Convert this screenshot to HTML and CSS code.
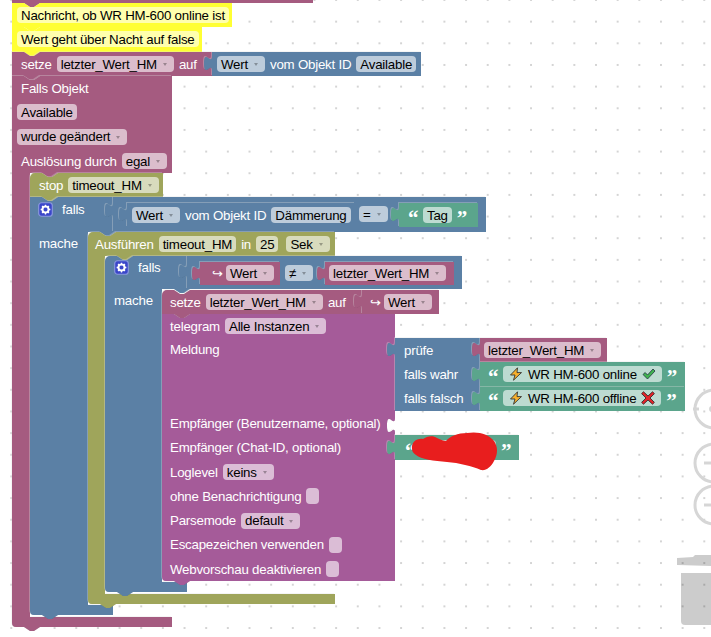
FILE: index.html
```html
<!DOCTYPE html>
<html lang="de">
<head>
<meta charset="utf-8">
<title>Blockly</title>
<link rel="stylesheet" href="styles.css">
</head>
<body>
<div class="ws">
  <svg class="shapes" width="711" height="637" viewBox="0 0 711 637">
    <defs>
      <symbol id="gear" viewBox="0 0 16 16">
        <rect x="0.75" y="0.75" width="14.5" height="14.5" rx="3" fill="#3a46c9" stroke="#8c9ade" stroke-width="1.2"/>
        <circle cx="8" cy="8" r="3.3" fill="none" stroke="#fff" stroke-width="2"/>
        <path d="M8 2.8V13.2M2.8 8H13.2M4.3 4.3L11.7 11.7M11.7 4.3L4.3 11.7" stroke="#fff" stroke-width="1.4"/>
        <circle cx="8" cy="8" r="2.1" fill="#3a46c9"/>
      </symbol>
    </defs>
    <g class="trash">
      <path d="M677 558L693 557L695 555L711 555V566L677 565Z"/>
      <path d="M681 573H711V625H685A4 4 0 0 1 681 621Z"/>
    </g>
    <g class="ctl">
      <circle cx="714" cy="409" r="19"/><path d="M693 409H699"/><circle class="dot" cx="712" cy="409" r="3"/>
      <circle cx="714" cy="463" r="19"/><path d="M704 463H711"/>
      <circle cx="714" cy="505" r="19"/><path d="M704 505H711"/>
    </g>
    <path class="b pk" d="M12,-5H313V3H40l-6,4h-4l-6,-4H12Z"/>
    <path class="ye" d="M12,3H24l6,4h4l6,-4H232V27H40l-6,4h-4l-6,-4H12Z"/>
    <path class="ye" d="M12,27H24l6,4h4l6,-4H202V52H40l-6,4h-4l-6,-4H12Z"/>
    <path class="b pk" d="M12,52H24l6,4h4l6,-4H212V76H40l-6,4h-4l-6,-4H12Z"/>
    <path class="b bl" d="M212,52H421V76H212V71c0,-10 -8,8 -8,-7.5s8,2.5 8,-7.5V52Z"/>
    <path class="b pk" d="M12,76H24l6,4h4l6,-4H172V173H58l-6,4h-4l-6,-4H30V617H172V627H40l-6,4h-4l-6,-4H16a4,4 0 0 1 -4,-4Z"/>
    <path class="b ol" d="M30,178a5,5 0 0 1 5,-5H42l6,4h4l6,-4H163V197H58l-6,4h-4l-6,-4H30Z"/>
    <path class="b bl" d="M30,197H42l6,4h4l6,-4H113V232H116l-6,4h-4l-6,-4H88V605H113V615H58l-6,4h-4l-6,-4H34a4,4 0 0 1 -4,-4Z"/>
    <path class="b bl" d="M113,197H486V232H113V218c0,-10 -8,8 -8,-7.5s8,2.5 8,-7.5V197Z"/>
    <path class="b bl" d="M127,203H355V227H127V222c0,-10 -8,8 -8,-7.5s8,2.5 8,-7.5V203Z"/>
    <path class="b gr" d="M399,203H478V227H399V222c0,-10 -8,8 -8,-7.5s8,2.5 8,-7.5V203Z"/>
    <path class="b ol" d="M88,237a5,5 0 0 1 5,-5H100l6,4h4l6,-4H335V256H133l-6,4h-4l-6,-4H105V594H335V604H116l-6,4h-4l-6,-4H92a4,4 0 0 1 -4,-4Z"/>
    <path class="b bl" d="M105,261a5,5 0 0 1 5,-5H117l6,4h4l6,-4H187V289H190l-6,4h-4l-6,-4H162V582H187V592H133l-6,4h-4l-6,-4H109a4,4 0 0 1 -4,-4Z"/>
    <path class="b bl" d="M187,256H462V289H187V279c0,-10 -8,8 -8,-7.5s8,2.5 8,-7.5V256Z"/>
    <path class="b pk" d="M200,262H280V285H200V281c0,-10 -8,8 -8,-7.5s8,2.5 8,-7.5V262Z"/>
    <path class="b pk" d="M325,262H454V285H325V281c0,-10 -8,8 -8,-7.5s8,2.5 8,-7.5V262Z"/>
    <path class="b mg" d="M162,314H174l6,4h4l6,-4H395V418c0,10 -8,-8 -8,7.5s8,-2.5 8,7.5V581H190l-6,4h-4l-6,-4H166a4,4 0 0 1 -4,-4Z"/>
    <path class="b pk" d="M162,295a5,5 0 0 1 5,-5H174l6,4h4l6,-4H362V314H190l-6,4h-4l-6,-4H162Z"/>
    <path class="b pk" d="M362,290H439V314H362V309c0,-10 -8,8 -8,-7.5s8,2.5 8,-7.5V290Z"/>
    <path class="b bl" d="M395,338H480V411H395V357c0,-10 -8,8 -8,-7.5s8,2.5 8,-7.5V338Z"/>
    <path class="b pk" d="M480,338H607V362H480V357c0,-10 -8,8 -8,-7.5s8,2.5 8,-7.5V338Z"/>
    <path class="b gr" d="M480,362H685V387H480V382c0,-10 -8,8 -8,-7.5s8,2.5 8,-7.5V362Z"/>
    <path class="b gr" d="M480,387H685V411H480V406c0,-10 -8,8 -8,-7.5s8,2.5 8,-7.5V387Z"/>
    <path class="b gr" d="M395,435H519V460H395V455c0,-10 -8,8 -8,-7.5s8,2.5 8,-7.5V435Z"/>
  </svg>

  <div class="row p-c1"><span class="f">Nachricht, ob WR HM-600 online ist</span></div>
  <div class="row p-c2"><span class="f">Wert geht über Nacht auf false</span></div>

  <div class="row p-s1"><span>setze</span><span class="f dd">letzter_Wert_HM</span><span>auf</span></div>
  <div class="row p-w1"><span class="f dd">Wert</span><span>vom Objekt ID</span><span class="f">Available</span></div>

  <div class="stack p-fo">
    <div class="line"><span class="lab">Falls Objekt</span></div>
    <div class="line"><span class="f">Available</span></div>
    <div class="line"><span class="f dd">wurde geändert</span></div>
    <div class="line"><span class="lab">Auslösung durch</span><span class="f dd">egal</span></div>
  </div>

  <div class="row p-st"><span>stop</span><span class="f dd">timeout_HM</span></div>

  <div class="row p-if1"><svg class="gear"><use href="#gear"/></svg><span>falls</span></div>
  <div class="row p-m1"><span>mache</span></div>
  <div class="row p-v1"><span class="f dd">Wert</span><span>vom Objekt ID</span><span class="f">Dämmerung</span></div>
  <div class="row p-eq"><span class="f dd">=</span></div>
  <div class="row p-tag"><span class="q">“</span><span class="f">Tag</span><span class="q">”</span></div>

  <div class="row p-au"><span>Ausführen</span><span class="f">timeout_HM</span><span>in</span><span class="f">25</span><span class="f dd sek">Sek</span></div>

  <div class="row p-if2"><svg class="gear"><use href="#gear"/></svg><span>falls</span></div>
  <div class="row p-m2"><span>mache</span></div>
  <div class="row p-a1"><span class="arrow">↪</span><span class="f dd">Wert</span></div>
  <div class="row p-ne"><span class="f dd">≠</span></div>
  <div class="row p-a2"><span class="f dd">letzter_Wert_HM</span></div>

  <div class="row p-s2"><span>setze</span><span class="f dd">letzter_Wert_HM</span><span>auf</span></div>
  <div class="row p-w2"><span class="arrow">↪</span><span class="f dd">Wert</span></div>

  <div class="stack p-tg">
    <div class="line"><span>telegram</span><span class="f dd">Alle Instanzen</span></div>
    <div class="line tall"><span>Meldung</span></div>
    <div class="line"><span>Empfänger (Benutzername, optional)</span></div>
    <div class="line"><span>Empfänger (Chat-ID, optional)</span></div>
    <div class="line"><span>Loglevel</span><span class="f dd">keins</span></div>
    <div class="line"><span>ohne Benachrichtigung</span><span class="cb"></span></div>
    <div class="line"><span>Parsemode</span><span class="f dd">default</span></div>
    <div class="line"><span>Escapezeichen verwenden</span><span class="cb"></span></div>
    <div class="line"><span>Webvorschau deaktivieren</span><span class="cb"></span></div>
  </div>

  <div class="stack p-pr">
    <div class="line"><span>prüfe</span></div>
    <div class="line"><span>falls wahr</span></div>
    <div class="line"><span>falls falsch</span></div>
  </div>
  <div class="row p-lz"><span class="f dd">letzter_Wert_HM</span></div>

  <div class="row p-on"><span class="q">“</span><span class="f msg">
    <svg class="ic" viewBox="0 0 14 14"><path class="bolt" d="M8.5 0.8L1.5 8H6L4.5 13.2L12.5 5.6H8L8.5 0.8Z"/></svg>
    <span>WR HM-600 online</span>
    <svg class="ic" viewBox="0 0 14 14"><path class="chk" d="M1 7.5L3.2 5.5L5.5 8L11 2L13 4L5.5 12Z"/></svg>
  </span><span class="q">”</span></div>
  <div class="row p-off"><span class="q">“</span><span class="f msg">
    <svg class="ic" viewBox="0 0 14 14"><path class="bolt" d="M8.5 0.8L1.5 8H6L4.5 13.2L12.5 5.6H8L8.5 0.8Z"/></svg>
    <span>WR HM-600 offline</span>
    <svg class="ic" viewBox="0 0 14 14"><path class="crs" d="M2.5 0.8L7 5L11.5 0.8L13.4 2.6L9 7L13.4 11.4L11.5 13.2L7 9L2.5 13.2L0.6 11.4L5 7L0.6 2.6Z"/></svg>
  </span><span class="q">”</span></div>

  <div class="row p-chat"><span class="q">“</span><span class="f hidden-id"></span><span class="q">”</span></div>

  <svg class="scribble" width="711" height="637" viewBox="0 0 711 637">
    <path d="M412 449C411 442 417 438 423 439C427 436 433 435 437 438C441 440 444 441 446 441C450 436 458 433 467 433C478 431 489 434 494 441C498 447 498 454 494 461C491 467 486 471 481 470C472 466 459 463 447 462C434 461 421 459 416 455C413 453 412 451 412 449Z"/>
  </svg>
</div>
</body>
</html>
```
FILE: styles.css
```css
html, body {
  margin: 0;
  padding: 0;
  background: #fff;
}

.ws {
  position: relative;
  width: 711px;
  height: 637px;
  overflow: hidden;
  font-family: "Liberation Sans", Arial, sans-serif;
  font-size: 13.3px;
  letter-spacing: -0.22px;
  color: #fff;
  background-color: #fff;
  background-image: radial-gradient(circle at 1px 1px, #d4d4d4 1px, transparent 1.3px);
  background-size: 21.67px 21.67px;
  background-position: 10.3px -1px;
}

.shapes, .scribble {
  position: absolute;
  left: 0;
  top: 0;
}

.scribble path { fill: #e81e1e; }

.trash path { fill: rgba(0, 0, 0, 0.2); }
.ctl circle, .ctl path { fill: none; stroke: #d6d6d6; stroke-width: 3; }
.ctl circle.dot { fill: #d6d6d6; stroke: none; }

.b { filter: drop-shadow(-0.5px -0.5px 0 rgba(255, 255, 255, 0.28)) drop-shadow(0.8px 0.8px 0 rgba(0, 0, 0, 0.2)); }
.pk { fill: #a55b80; }
.ye { fill: #ffff33; }
.bl { fill: #5b80a5; }
.ol { fill: #9fa55b; }
.gr { fill: #5ba58c; }
.mg { fill: #a55b99; }

.row {
  position: absolute;
  display: flex;
  align-items: center;
  gap: 5px;
  height: 24px;
  white-space: nowrap;
}

.stack {
  position: absolute;
  display: flex;
  flex-direction: column;
  white-space: nowrap;
}

.line {
  display: flex;
  align-items: center;
  gap: 5px;
  height: 24.3px;
}

.line.tall {
  height: 73px;
  align-items: flex-start;
  line-height: 24.3px;
}

.lab { margin-left: 4px; }

.f {
  display: inline-flex;
  align-items: center;
  height: 16px;
  padding: 0 4px;
  border-radius: 4px;
  background: rgba(255, 255, 255, 0.6);
  color: #000;
}

.dd { padding-right: 7px; }

.dd::after {
  content: "";
  width: 0;
  height: 0;
  margin: 1px 0 0 6px;
  border-left: 2.5px solid transparent;
  border-right: 2.5px solid transparent;
  border-top: 3px solid rgba(0, 0, 0, 0.3);
}

.cb {
  width: 13px;
  height: 16px;
  border-radius: 4px;
  background: rgba(255, 255, 255, 0.6);
}

.q {
  width: 10px;
  height: 20px;
  font-family: "Liberation Serif", serif;
  font-weight: 700;
  font-size: 21px;
  line-height: 26px;
  letter-spacing: 0;
  color: #fff;
}

.arrow {
  width: 9px;
  font-family: "DejaVu Sans", sans-serif;
  font-size: 13px;
}

.gear { width: 15px; height: 15px; margin-right: 4px; }

.msg { gap: 5px; padding: 0 6px; }
.ic { width: 14px; height: 14px; }
.bolt { fill: #f7b02c; stroke: #333; stroke-width: 0.9; }
.chk { fill: #3fb34f; stroke: #234; stroke-width: 0.8; }
.crs { fill: #e3252b; stroke: #222; stroke-width: 0.8; }

.sek { margin-left: 3px; }
.hidden-id { width: 68px; }

.p-c1 { left: 17px; top: 3px; }
.p-c2 { left: 17px; top: 27px; }
.p-s1 { left: 21px; top: 52px; }
.p-w1 { left: 217px; top: 52px; }
.p-fo { left: 17px; top: 76px; }
.p-st { left: 39px; top: 173px; }
.p-if1 { left: 38px; top: 197px; }
.p-m1 { left: 39px; top: 231px; }
.p-v1 { left: 132px; top: 203px; }
.p-eq { left: 359px; top: 202px; }
.p-tag { left: 408px; top: 203px; }
.p-au { left: 95px; top: 232px; }
.p-if2 { left: 114px; top: 255px; }
.p-m2 { left: 114px; top: 288px; }
.p-a1 { left: 212px; top: 261px; }
.p-ne { left: 285px; top: 261px; }
.p-a2 { left: 329px; top: 261px; }
.p-s2 { left: 170px; top: 290px; }
.p-w2 { left: 370px; top: 290px; }
.p-tg { left: 170px; top: 314px; }
.p-pr { left: 404px; top: 338px; }
.p-lz { left: 484px; top: 338px; }
.p-on { left: 488px; top: 362px; }
.p-off { left: 488px; top: 386px; }
.p-chat { left: 405px; top: 436px; }
```
